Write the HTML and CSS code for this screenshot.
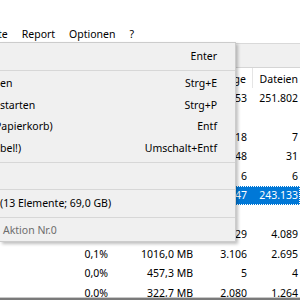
FILE: index.html
```html
<!DOCTYPE html>
<html lang="de">
<head>
  <meta charset="UTF-8">
  <title>TreeSize</title>
  <link rel="stylesheet" href="styles.css">
</head>
<body>
  <div class="screen">
    <div class="title-strip"></div>

    <!-- Menu bar -->
    <nav class="menubar">
      <span class="bar-item first">te</span>
      <span class="bar-item">Report</span>
      <span class="bar-item">Optionen</span>
      <span class="bar-item">?</span>
    </nav>

    <div class="window">
      <div class="toolbar"></div>
      <div class="list">
        <div class="row head">
          <span>Name</span>
          <span>%</span>
          <span>Größe</span>
          <span>Menge</span>
          <span>Dateien</span>
        </div>
        <div class="row"><span></span><span>3,6%</span><span>2,5 GB</span><span>12.753</span><span>251.802</span></div>
        <div class="row"><span></span><span></span><span></span><span></span><span></span></div>
        <div class="row"><span></span><span>1,2%</span><span>820,1 MB</span><span>118</span><span>7</span></div>
        <div class="row"><span></span><span>0,9%</span><span>640,4 MB</span><span>148</span><span>31</span></div>
        <div class="row"><span></span><span>0,4%</span><span>301,0 MB</span><span>6</span><span>6</span></div>
        <div class="row selected"><span></span><span>92,1%</span><span>63,5 GB</span><span>31.447</span><span>243.133</span></div>
        <div class="row"><span></span><span></span><span></span><span></span><span></span></div>
        <div class="row"><span></span><span>0,2%</span><span>1,2 GB</span><span>1.029</span><span>4.089</span></div>
        <div class="row"><span></span><span>0,1%</span><span>1016,0 MB</span><span>3.106</span><span>2.695</span></div>
        <div class="row"><span></span><span>0,0%</span><span>457,3 MB</span><span>5</span><span>4</span></div>
        <div class="row"><span></span><span>0,0%</span><span>322,7 MB</span><span>2.080</span><span>1.264</span></div>
      </div>
      <div class="hbar"></div>
    </div>

    <!-- Open popup menu -->
    <div class="popup">
      <div class="item"><span class="label"></span><span class="key">Enter</span></div>
      <div class="sep"></div>
      <div class="item"><span class="label">en</span><span class="key">Strg+E</span></div>
      <div class="item"><span class="label">starten</span><span class="key">Strg+P</span></div>
      <div class="item"><span class="label cut">Papierkorb)</span><span class="key">Entf</span></div>
      <div class="item"><span class="label">bel!)</span><span class="key">Umschalt+Entf</span></div>
      <div class="sep"></div>
      <div class="item"><span class="label"></span><span class="key"></span></div>
      <div class="sep"></div>
      <div class="item"><span class="label">(13 Elemente; 69,0 GB)</span><span class="key"></span></div>
      <div class="sep"></div>
      <div class="item disabled"><span class="label indent">Aktion Nr.0</span><span class="key"></span></div>
    </div>
  </div>
</body>
</html>
```

FILE: styles.css
```css
/* Base */
body {
  margin: 0;
  font-family: "Noto Sans", "Segoe UI", sans-serif;
  font-size: 10.5px;
  color: #000;
  background: #fff;
}

.screen {
  position: relative;
  width: 300px;
  height: 300px;
  overflow: hidden;
}

.title-strip {
  height: 26px;
  background: #fff;
}

/* Menu bar */
.menubar {
  display: flex;
  height: 17px;
  align-items: center;
  background: #fff;
}

.bar-item {
  padding: 0 7px;
  line-height: 17px;
}

.bar-item.first {
  padding-left: 0;
  margin-left: -2px;
}

/* Window content behind the menu */
.window {
  display: flex;
  flex-direction: column;
  height: 257px;
}

.toolbar {
  height: 23px;
  background: #f0f0f0;
  border-top: 1px solid #d9d9d9;
  border-bottom: 1px solid #d5d5d5;
}

.list {
  height: 229px;
  overflow: hidden;
  background: #fff;
}

.row {
  display: grid;
  grid-template-columns: 50px 64px 85px 54px 47px;
  height: 19.5px;
  align-items: center;
}

.row span {
  text-align: right;
  padding-right: 6px;
  white-space: nowrap;
  overflow: hidden;
}

.row span:last-child {
  padding-right: 2px;
}

.row.head {
  height: 20px;
  align-items: stretch;
}

.row.head span {
  padding-top: 4px;
  border-right: 1px solid #e5e5e5;
}

.row.head span:last-child {
  border-right: none;
}

.row.selected {
  background: #0078d7;
  color: #fff;
  outline: 1px dotted #fff;
  outline-offset: -1px;
}

.hbar {
  flex: 1;
  background: #7a7a7a;
  border-top: 1px solid #c8c8c8;
}

/* Popup menu */
.popup {
  position: absolute;
  top: 42px;
  left: 0;
  width: 236px;
  box-sizing: border-box;
  padding-top: 2px;
  background: #f0f0f0;
  border: 1px solid #cccccc;
  border-left: none;
  box-shadow: 2px 2px 3px rgba(0, 0, 0, 0.25);
}

.item {
  display: flex;
  justify-content: space-between;
  align-items: center;
  height: 21.5px;
  padding-right: 18px;
  white-space: nowrap;
}

.label.cut {
  margin-left: -5px;
}

.label.indent {
  padding-left: 3px;
}

.item.disabled {
  color: #6d6d6d;
}

.sep {
  height: 1px;
  margin: 3px 0 2px;
  background: #d7d7d7;
}
```
